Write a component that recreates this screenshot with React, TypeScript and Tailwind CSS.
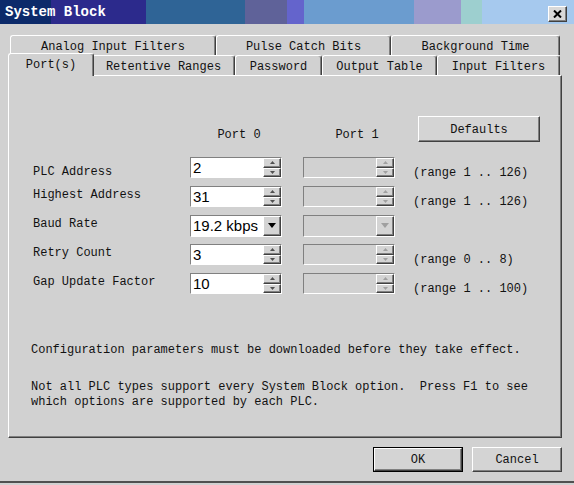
import React from "react";

const raised =
  "border border-t-white border-l-white border-r-[#404040] border-b-[#404040] shadow-[inset_-1px_-1px_#808080]";
const sunken =
  "border border-t-[#808080] border-l-[#808080] border-r-white border-b-white shadow-[inset_1px_1px_#404040]";

function Arrow({ dir, color }: { dir: "up" | "down"; color: string }) {
  return (
    <svg width="5" height="3" viewBox="0 0 5 3">
      {dir === "up" ? <path d="M2.5 0 L5 3 L0 3 Z" fill={color} /> : <path d="M0 0 L5 0 L2.5 3 Z" fill={color} />}
    </svg>
  );
}

function SpinBox({ value, disabled }: { value?: string; disabled?: boolean }) {
  return (
    <div className={`flex h-[21px] w-[92px] ${sunken}`}>
      <div
        className={`flex flex-1 items-center pl-[2px] font-['Liberation_Sans',sans-serif] text-[15px] leading-none text-black ${
          disabled ? "bg-[#d1d1d1]" : "bg-white"
        }`}
      >
        {value}
      </div>
      <div className="flex w-[18px] flex-col">
        <div className={`flex flex-1 items-center justify-center bg-[#d4d4d4] ${raised}`}>
          <Arrow dir="up" color={disabled ? "#a0a0a0" : "#505050"} />
        </div>
        <div className={`flex flex-1 items-center justify-center bg-[#d4d4d4] ${raised}`}>
          <Arrow dir="down" color={disabled ? "#a0a0a0" : "#505050"} />
        </div>
      </div>
    </div>
  );
}

function Combo({ value, disabled }: { value?: string; disabled?: boolean }) {
  return (
    <div className={`flex h-[22px] w-[92px] ${sunken}`}>
      <div
        className={`flex flex-1 items-center pl-[2px] font-['Liberation_Sans',sans-serif] text-[15px] leading-none text-black ${
          disabled ? "bg-[#d1d1d1]" : "bg-white"
        }`}
      >
        {value}
      </div>
      <div className={`flex w-[18px] items-center justify-center bg-[#d4d4d4] ${raised}`}>
        <svg width="8" height="5" viewBox="0 0 8 5">
          <path d="M0 0 L8 0 L4 5 Z" fill={disabled ? "#a0a0a0" : "#000"} />
        </svg>
      </div>
    </div>
  );
}

function Tab({ label, w, selected }: { label: string; w: number; selected?: boolean }) {
  if (selected) {
    return (
      <div
        style={{ width: w + 4 }}
        className="relative z-10 -mx-[2px] -mb-[1px] -mt-[2px] flex h-[23px] justify-center rounded-t-[3px] border-l border-r border-t border-l-white border-r-[#404040] border-t-white bg-[#d1d1d1] pt-[4px] shadow-[inset_-1px_0_#808080]"
      >
        {label}
      </div>
    );
  }
  return (
    <div
      style={{ width: w }}
      className="flex h-[20px] items-center justify-center rounded-t-[3px] border-l border-r border-t border-l-white border-r-[#404040] border-t-white bg-[#d1d1d1] pt-[3px] shadow-[inset_-1px_0_#808080]"
    >
      {label}
    </div>
  );
}

const rows = [
  { label: "PLC Address", value: "2", range: "(range 1 .. 126)", pad: "pt-[9px]" },
  { label: "Highest Address", value: "31", range: "(range 1 .. 126)", pad: "pb-[2px]" },
  { label: "Baud Rate", value: "19.2 kbps", combo: true, pad: "pb-[2px]" },
  { label: "Retry Count", value: "3", range: "(range 0 .. 8)", pad: "pb-[2px]" },
  { label: "Gap Update Factor", value: "10", range: "(range 1 .. 100)", pad: "pb-[2px]" },
];

export default function App() {
  return (
    <div className="h-[485px] w-[574px] overflow-hidden bg-[#d1d1d1] font-['Liberation_Mono',monospace] text-[12px] leading-[15px] text-[#111]">
      <div className="flex h-[483px] flex-col border-b-2 border-b-[#505050]">
        {/* Title bar */}
        <div className="flex h-[24px] items-center justify-between bg-[linear-gradient(90deg,#0c2a6a_0,#0c2a6a_51px,#2c2a8c_51px,#2c2a8c_146px,#2f6496_146px,#2f6496_245px,#5f6299_245px,#5f6299_287px,#6464cc_287px,#6464cc_304px,#6b9ccf_304px,#6b9ccf_414px,#9b9bcd_414px,#9b9bcd_461px,#9dcfcf_461px,#9dcfcf_482px,#a6c9ee_482px,#a6c9ee_100%)] pl-[5px] pr-[7px]">
          <span className="text-[14px] font-bold text-white">System Block</span>
          <div className={`mt-[3px] flex h-[16px] w-[19px] items-center justify-center bg-[#d8d8d8] ${raised}`}>
            <svg width="9" height="8" viewBox="0 0 9 8">
              <path d="M1 0.5 L8 7.5 M8 0.5 L1 7.5" stroke="#000" strokeWidth="2" />
            </svg>
          </div>
        </div>

        {/* Tabs */}
        <div className="flex pl-[10px] pt-[11px]">
          <Tab label="Analog Input Filters" w={206} />
          <Tab label="Pulse Catch Bits" w={175} />
          <Tab label="Background Time" w={169} />
        </div>
        <div className="flex pl-[10px]">
          <Tab label="Port(s)" w={82} selected />
          <Tab label="Retentive Ranges" w={143} />
          <Tab label="Password" w={87} />
          <Tab label="Output Table" w={115} />
          <Tab label="Input Filters" w={123} />
        </div>

        {/* Panel */}
        <div className={`ml-[8px] flex h-[363px] w-[554px] flex-col pl-[22px] ${raised}`}>
          <div className="ml-[2px] mt-[40px] flex h-[26px] items-end">
            <div className="w-[157px]" />
            <div className="-mb-[1px] w-[92px] pl-[6px] text-center">Port 0</div>
            <div className="-mb-[1px] ml-[21px] w-[92px] pl-[16px] text-center">Port 1</div>
            <div
              className={`ml-[23px] flex h-[26px] w-[122px] items-center justify-center self-start bg-[#d4d4d4] pt-[3px] ${raised}`}
            >
              Defaults
            </div>
          </div>

          <div className="ml-[2px] mt-[15px] flex flex-col gap-[8px]">
            {rows.map((r) => (
              <div key={r.label} className="flex h-[21px] items-center">
                <div className={`w-[157px] ${r.pad}`}>{r.label}</div>
                {r.combo ? <Combo value={r.value} /> : <SpinBox value={r.value} />}
                <div className="ml-[21px]">{r.combo ? <Combo disabled /> : <SpinBox disabled />}</div>
                {r.range && <div className="ml-[18px] pt-[12px]">{r.range}</div>}
              </div>
            ))}
          </div>

          <div className="mt-[49px] whitespace-pre">
            Configuration parameters must be downloaded before they take effect.
          </div>
          <div className="mt-[22px] whitespace-pre">
            {"Not all PLC types support every System Block option.  Press F1 to see\nwhich options are supported by each PLC."}
          </div>
        </div>

        {/* Buttons */}
        <div className="mt-[9px] flex justify-end gap-[9px] pr-[12px]">
          <div className="h-[25px] w-[90px] border border-black">
            <div className={`flex h-full w-full items-center justify-center bg-[#d4d4d4] pt-[2px] ${raised}`}>OK</div>
          </div>
          <div className={`flex h-[25px] w-[90px] items-center justify-center bg-[#d4d4d4] pt-[2px] ${raised}`}>
            Cancel
          </div>
        </div>
      </div>
    </div>
  );
}
